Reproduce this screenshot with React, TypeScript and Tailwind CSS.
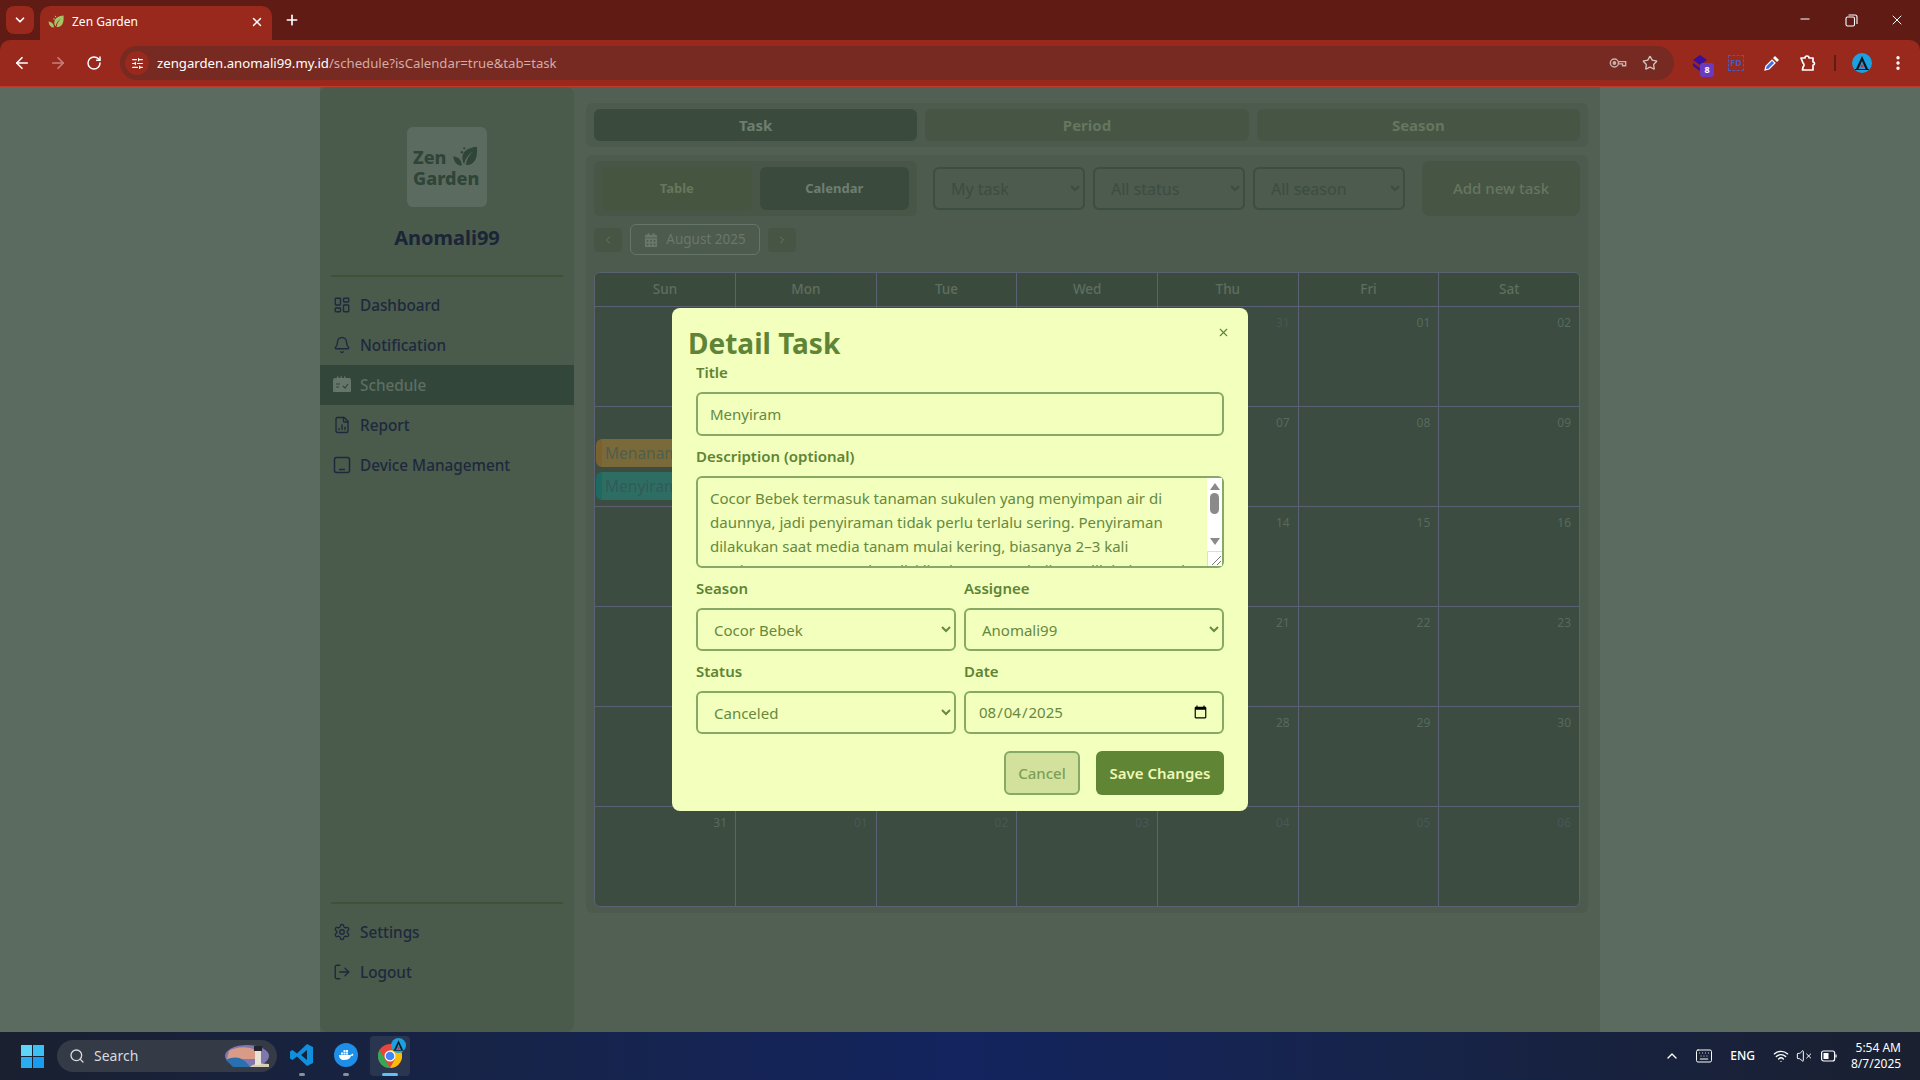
import {
  ArrowLeft,
  ArrowRight,
  Bell,
  ChevronDown,
  ChevronLeft,
  ChevronRight,
  ChevronUp,
  FileChartColumn,
  Keyboard,
  LayoutDashboard,
  LogOut,
  Minus,
  MoreVertical,
  Plus,
  RotateCw,
  Search,
  Settings,
  SlidersHorizontal,
  Star,
  VolumeX,
  Wifi,
  X,
} from 'lucide-react'
import { FaCalendarDays } from 'react-icons/fa6'

const days = ['Sun', 'Mon', 'Tue', 'Wed', 'Thu', 'Fri', 'Sat']

const dates = [
  ['27', '28', '29', '30', '31', '01', '02'],
  ['03', '04', '05', '06', '07', '08', '09'],
  ['10', '11', '12', '13', '14', '15', '16'],
  ['17', '18', '19', '20', '21', '22', '23'],
  ['24', '25', '26', '27', '28', '29', '30'],
  ['31', '01', '02', '03', '04', '05', '06'],
]

const description =
  'Cocor Bebek termasuk tanaman sukulen yang menyimpan air di daunnya, jadi penyiraman tidak perlu terlalu sering. Penyiraman dilakukan saat media tanam mulai kering, biasanya 2–3 kali seminggu tergantung kondisi lingkungan. Sebaiknya dilakukan pada pagi hari agar daun tidak membusuk.'

function LeafMark({ className }: { className?: string }) {
  return (
    <svg className={className} viewBox="0 0 32 28" fill="currentColor">
      <path d="M31 1c-9 1-16 4-18 11-1 4 0 8 2 11 1-6 5-12 11-16-5 5-8 10-9 17 8 1 13-5 14-13 .4-3 .4-7 0-10z" />
      <path d="M12 25C6 25 2 21 1 13c5 1 9 3 10 7 .5 2 .8 3 1 5z" />
      <circle cx="12" cy="8" r="1.6" />
      <circle cx="15" cy="3" r="1.3" />
    </svg>
  )
}

function ScheduleIcon() {
  return (
    <svg className="h-[18px] w-[18px]" viewBox="0 0 18 18" fill="#66756a">
      <path d="M0 4a2 2 0 012-2h2V.5h1.500V2h2V.5H9V2h2V.5h1.500V2H16a2 2 0 012 2v11a1 1 0 01-1 1H1a1 1 0 01-1-1z" />
      <path d="M3 8h4M3 11h3M10 10l2 2 3-4" stroke="#32473a" strokeWidth="1.200" fill="none" />
    </svg>
  )
}

function DeviceIcon() {
  return (
    <svg className="h-[18px] w-[18px]" viewBox="0 0 18 18" fill="none" stroke="currentColor" strokeWidth="1.500">
      <rect x="1.500" y="1.500" width="15" height="15" rx="2" />
      <path d="M6 13.500h6" />
    </svg>
  )
}

function KeyIcon() {
  return (
    <svg className="h-[18px] w-[18px]" viewBox="0 0 20 20" fill="none" stroke="#c9b0aa" strokeWidth="1.600">
      <circle cx="6" cy="10" r="4.500" />
      <circle cx="6" cy="10" r="1.300" fill="#c9b0aa" />
      <path d="M10.500 8.500H18.500V13H15V11H10.500" />
    </svg>
  )
}

function PuzzleIcon() {
  return (
    <svg className="h-[18px] w-[18px]" viewBox="0 0 18 18" fill="none" stroke="white" strokeWidth="1.700" strokeLinejoin="round">
      <path d="M2 4h4a2 2 0 014 0h4v4a1.500 1.500 0 010 3v5H3.500L4 13a2.500 2.500 0 000-4z" />
    </svg>
  )
}

function Avatar({ size }: { size: string }) {
  return (
    <svg className={size} viewBox="0 0 20 20">
      <circle cx="10" cy="10" r="10" fill="#1ba1df" />
      <path d="M4 16L10 3l6 13h-2.500L10 8l-3.500 8z" fill="#0d1620" />
      <circle cx="10" cy="13" r="1.500" fill="#e6252a" />
      <path d="M3 16.500h14" stroke="#0d1620" strokeWidth="1" />
    </svg>
  )
}

function ToolCell({ children }: { children: React.ReactNode }) {
  return <div className="flex h-9 w-9 items-center justify-center">{children}</div>
}

function BrowserBar() {
  return (
    <header className="shrink-0 bg-[#5f1b14] text-white">
      <div className="flex h-10 items-end">
        <div className="mb-[6px] ml-[6px] flex h-7 w-7 items-center justify-center rounded-lg bg-[#98291c]">
          <ChevronDown size={14} strokeWidth={3} />
        </div>
        <div className="ml-[6px] flex h-[34px] w-[232px] items-center rounded-t-[10px] bg-[#98291c] pb-[2px] pl-2 pr-2">
          <LeafMark className="h-4 w-4 text-[#a6c466]" />
          <span className="ml-2 flex-1 text-xs">Zen Garden</span>
          <X size={14} strokeWidth={2.500} />
        </div>
        <Plus className="mb-[12px] ml-[12px]" size={16} strokeWidth={2.500} />
        <div className="flex-1" />
        <div className="mb-[12px] flex">
          <div className="flex w-[46px] justify-center">
            <Minus size={14} />
          </div>
          <div className="flex w-[46px] items-center justify-center">
            <svg className="h-[13px] w-[13px]" viewBox="0 0 13 13" fill="none" stroke="white" strokeWidth="1.100">
              <rect x="1" y="3" width="8.500" height="9" rx="1.500" />
              <path d="M3.500 1h6.500a2 2 0 012 2v7" />
            </svg>
          </div>
          <div className="flex w-[46px] justify-center">
            <X size={16} strokeWidth={1.500} />
          </div>
        </div>
      </div>
      <div className="flex h-[46px] items-center rounded-t-[10px] bg-[#98291c] pl-1">
        <ToolCell>
          <ArrowLeft size={18} strokeWidth={2.200} />
        </ToolCell>
        <ToolCell>
          <ArrowRight className="text-[#c9807a]" size={18} strokeWidth={2.200} />
        </ToolCell>
        <ToolCell>
          <RotateCw size={16} strokeWidth={2.200} />
        </ToolCell>
        <div className="ml-2 flex h-[34px] w-[1554px] items-center rounded-full bg-[#762a22] pl-[5px] pr-4">
          <div className="flex h-6 w-6 items-center justify-center rounded-full bg-[#98291c]">
            <SlidersHorizontal size={13} strokeWidth={2.200} />
          </div>
          <span className="ml-2 flex-1 pt-px text-[13.200px]">
            zengarden.anomali99.my.id<span className="text-[#d3aca6]">/schedule?isCalendar=true&amp;tab=task</span>
          </span>
          <KeyIcon />
          <Star className="ml-[15px] text-[#d6c2bd]" size={16} strokeWidth={2} />
        </div>
        <div className="ml-2 flex">
          <ToolCell>
            <div className="relative h-[18px] w-[18px]">
              <svg className="h-[18px] w-[18px]" viewBox="0 0 18 18" fill="#3a0f9c">
                <path d="M9 1l7 5-7 5-7-5zM2 9l7 5 7-5v3l-7 5-7-5z" />
              </svg>
              <span className="absolute -bottom-[5px] -right-[5px] flex h-[14px] w-[14px] items-center justify-center rounded-[3px] bg-[#6a3bc0] text-[9px] font-bold">
                8
              </span>
            </div>
          </ToolCell>
          <ToolCell>
            <div className="flex h-4 w-4 items-center justify-center border border-dashed border-[#4f58b8] text-[9px] font-bold text-[#4f58b8]">
              FD
            </div>
          </ToolCell>
          <ToolCell>
            <svg className="h-4 w-4" viewBox="0 0 16 16">
              <path d="M1 15l1-4 6-6 3 3-6 6z" fill="#3f6fe0" stroke="white" strokeWidth="1.200" />
              <path d="M9 3l2-2 4 4-2 2z" fill="white" />
            </svg>
          </ToolCell>
          <ToolCell>
            <PuzzleIcon />
          </ToolCell>
        </div>
        <div className="ml-2 h-4 w-[2px] bg-[#5f1b14]" />
        <div className="ml-2 flex">
          <ToolCell>
            <Avatar size="h-5 w-5" />
          </ToolCell>
          <ToolCell>
            <MoreVertical size={18} strokeWidth={2.500} />
          </ToolCell>
        </div>
      </div>
      <div className="h-px bg-[#c0392b]" />
    </header>
  )
}

function NavItem({ icon, label, active }: { icon: React.ReactNode; label: string; active?: boolean }) {
  return (
    <div className={`flex h-10 items-center gap-[9px] pl-[13px] ${active ? 'bg-[#32473a] text-[#5e6e62]' : 'text-[#1d293d]'}`}>
      <span className="flex w-[18px] justify-center">{icon}</span>
      <span className="text-[15.300px] font-medium">{label}</span>
    </div>
  )
}

function Sidebar() {
  return (
    <aside className="flex w-[254px] shrink-0 flex-col rounded-lg bg-[#4a5a4b] pb-[40px]">
      <div className="mt-10 flex h-20 w-20 flex-col justify-center gap-[3px] self-center rounded-md bg-[#5c6b60] pl-[6px] text-[#2f4537]">
        <div className="flex h-[18px] items-center">
          <span className="text-[18px] font-extrabold leading-[18px]">Zen</span>
          <LeafMark className="ml-[3px] h-[22px] w-[32px]" />
        </div>
        <span className="text-[18px] font-extrabold leading-[18px]">Garden</span>
      </div>
      <h2 className="mt-[17px] text-center text-xl font-bold leading-7 text-[#1b2538]">Anomali99</h2>
      <div className="mx-[11px] mt-[23px] h-[2px] bg-[#3f5236]" />
      <nav className="mt-[8px]">
        <NavItem icon={<LayoutDashboard size={18} strokeWidth={1.800} />} label="Dashboard" />
        <NavItem icon={<Bell size={18} strokeWidth={1.800} />} label="Notification" />
        <NavItem icon={<ScheduleIcon />} label="Schedule" active />
        <NavItem icon={<FileChartColumn size={18} strokeWidth={1.800} />} label="Report" />
        <NavItem icon={<DeviceIcon />} label="Device Management" />
      </nav>
      <div className="mt-auto">
        <div className="mx-[11px] mb-[8px] h-[2px] bg-[#3f5236]" />
        <NavItem icon={<Settings size={18} strokeWidth={1.800} />} label="Settings" />
        <NavItem icon={<LogOut size={18} strokeWidth={1.800} />} label="Logout" />
      </div>
    </aside>
  )
}

function TabButton({ label, active }: { label: string; active?: boolean }) {
  return (
    <button className={`flex-1 rounded-md text-[15px] font-bold ${active ? 'bg-[#3a4b3e] text-[#6e7e70]' : 'bg-[#475544] text-[#66765f]'}`}>
      {label}
    </button>
  )
}

function FilterSelect({ label }: { label: string }) {
  return (
    <select
      defaultValue={label}
      className="h-[43px] w-[152px] rounded-md border-2 border-[#3b4e41] bg-transparent px-3 text-base text-[#3b4d41]"
    >
      <option>{label}</option>
    </select>
  )
}

function Toolbar() {
  return (
    <div className="flex items-start">
      <div className="flex h-[55px] w-[323px] gap-2 rounded-md bg-[#485647] p-[6px] px-2">
        <button className="flex-1 rounded-md bg-[#465540] text-[13px] font-bold text-[#66775d]">Table</button>
        <button className="flex-1 rounded-md bg-[#3a4b3e] text-[13px] font-bold text-[#6e7e70]">Calendar</button>
      </div>
      <div className="ml-4 mt-[6px] flex gap-2">
        <FilterSelect label="My task" />
        <FilterSelect label="All status" />
        <FilterSelect label="All season" />
      </div>
      <button className="ml-auto h-[55px] w-[158px] rounded-lg bg-[#475545] text-[15px] font-medium text-[#66765f]">Add new task</button>
    </div>
  )
}

function DateNav() {
  return (
    <div className="mt-2 flex items-center gap-2">
      <button className="flex h-6 w-7 items-center justify-center rounded bg-[#475544] text-[#66765f]">
        <ChevronLeft size={12} />
      </button>
      <div className="flex h-[31px] w-[130px] items-center justify-center gap-2 rounded-md border border-[#66756a] text-[13.500px] text-[#68786b]">
        <FaCalendarDays size={14} />
        August 2025
      </div>
      <button className="flex h-6 w-7 items-center justify-center rounded bg-[#475544] text-[#66765f]">
        <ChevronRight size={12} />
      </button>
    </div>
  )
}

function Calendar() {
  return (
    <div className="mt-[17px] h-[635px] overflow-hidden rounded-md border border-[#596172] bg-[#3c4c40]">
      <div className="grid h-[33px] grid-cols-[140px_repeat(6,1fr)] bg-[#3a4b3e]">
        {days.map((day) => (
          <div key={day} className="flex items-center justify-center border-l border-[#596172] text-[13.500px] font-medium text-[#5f6e5f] first:border-l-0">
            {day}
          </div>
        ))}
      </div>
      <div className="grid h-[600px] grid-cols-[140px_repeat(6,1fr)] grid-rows-6">
        {dates.flat().map((date, i) => (
          <div key={i} className="relative border-l border-t border-[#596172] p-2 text-right text-xs text-[#586a5d] [&:nth-child(7n+1)]:border-l-0">
            <span className={i < 5 || i > 35 ? 'text-[#475857]' : ''}>{date}</span>
            {i === 7 && (
              <div className="absolute left-[1px] top-[32px] flex w-[200px] flex-col gap-[5px] text-left text-[15.500px]">
                <div className="h-[28px] rounded-md border-l-[6px] border-[#7a6230] bg-[#7a6a3a] pl-[3px] leading-[28px] text-[#505e4a]">Menanam</div>
                <div className="h-[28px] rounded-md border-l-[6px] border-[#1f6a60] bg-[#2e6e62] pl-[3px] leading-[28px] text-[#33595a]">Menyiram</div>
              </div>
            )}
          </div>
        ))}
      </div>
    </div>
  )
}

function MainContent() {
  return (
    <main className="flex-1 px-3 pt-4">
      <div className="flex h-11 gap-2 rounded-md bg-[#4d5a4e] px-2 py-[6px]">
        <TabButton label="Task" active />
        <TabButton label="Period" />
        <TabButton label="Season" />
      </div>
      <section className="mt-2 rounded-md bg-[#4d5a4e] px-2 pb-[6px] pt-[6px]">
        <Toolbar />
        <DateNav />
        <Calendar />
      </section>
    </main>
  )
}

function Label({ text }: { text: string }) {
  return <label className="mb-2 block text-[15px] font-semibold leading-6 text-[#5f8435]">{text}</label>
}

function TextareaScrollbar() {
  return (
    <div className="pointer-events-none absolute bottom-[2px] right-[2px] top-[2px] flex w-[15px] flex-col items-center bg-white">
      <div className="mt-[5px] h-0 w-0 border-x-[5px] border-b-[7px] border-x-transparent border-b-[#8a8a8a]" />
      <div className="mt-[3px] h-[21px] w-[9px] rounded-full bg-[#8a8a8a]" />
      <div className="mt-[24px] h-0 w-0 border-x-[5px] border-t-[7px] border-x-transparent border-t-[#8a8a8a]" />
      <svg className="mt-auto h-[15px] w-[15px]" viewBox="0 0 15 15" fill="none" stroke="#777">
        <path d="M.5 15V.5H15" stroke="#ddd" />
        <path d="M5 14L14 5M10 14l4-4" />
      </svg>
    </div>
  )
}

function TaskModal() {
  const fieldClass = 'rounded-md border-2 border-[#88a866] bg-transparent px-3 text-[15px] text-[#67893f] outline-none'

  return (
    <div className="absolute inset-0 flex items-center justify-center">
      <div className="relative h-[503px] w-[576px] rounded-lg bg-[#f2ffbd] pt-4">
        <X className="absolute right-[18px] top-[18px] text-[#5f8435]" size={13} strokeWidth={2} />
        <h1 className="h-9 pl-4 text-[28px] font-bold leading-[38px] text-[#5f8435]">Detail Task</h1>
        <form className="px-6">
          <Label text="Title" />
          <input readOnly value="Menyiram" className={`h-11 w-full ${fieldClass}`} />
          <div className="mt-2">
            <Label text="Description (optional)" />
            <div className="relative">
              <textarea
                readOnly
                value={description}
                className={`block h-[92px] w-full resize-none overflow-hidden py-2 pr-[27px] leading-6 ${fieldClass}`}
              />
              <TextareaScrollbar />
            </div>
          </div>
          <div className="mt-2 grid grid-cols-2 gap-x-2">
            <div>
              <Label text="Season" />
              <select defaultValue="Cocor Bebek" className={`h-[43px] w-full ${fieldClass}`}>
                <option>Cocor Bebek</option>
              </select>
            </div>
            <div>
              <Label text="Assignee" />
              <select defaultValue="Anomali99" className={`h-[43px] w-full ${fieldClass}`}>
                <option>Anomali99</option>
              </select>
            </div>
            <div className="mt-2">
              <Label text="Status" />
              <select defaultValue="Canceled" className={`h-[43px] w-full ${fieldClass}`}>
                <option>Canceled</option>
              </select>
            </div>
            <div className="mt-2">
              <Label text="Date" />
              <input type="date" defaultValue="2025-08-04" className={`h-[43px] w-full ${fieldClass}`} />
            </div>
          </div>
          <div className="mt-[17px] flex justify-end gap-4">
            <button type="button" className="h-11 w-[76px] rounded-md border-2 border-[#88a866] bg-[#d2e19b] text-[15px] font-medium text-[#7f9e58]">
              Cancel
            </button>
            <button type="button" className="h-11 w-[128px] rounded-md bg-[#5f8535] text-[15px] font-semibold text-[#eef8b4]">
              Save Changes
            </button>
          </div>
        </form>
      </div>
    </div>
  )
}

function ChromeLogo() {
  return (
    <svg className="h-6 w-6" viewBox="0 0 24 24">
      <circle cx="12" cy="12" r="12" fill="#e8453c" />
      <path d="M12 24A12 12 0 0 1 1.600 6L7 15.500 12 24z" fill="#34a853" />
      <path d="M12 24a12 12 0 0 0 10.400-18H12l5 9z" fill="#fbbc05" />
      <circle cx="12" cy="12" r="5.500" fill="white" />
      <circle cx="12" cy="12" r="4.300" fill="#4285f4" />
    </svg>
  )
}

function TaskBar() {
  return (
    <footer className="flex h-12 shrink-0 items-center bg-gradient-to-r from-[#1a2030] via-[#13245f] to-[#1a2030] text-white">
      <div className="ml-[21px] grid h-[23px] w-[23px] grid-cols-2 gap-[1px]">
        <div className="bg-[#5fd6f7]" />
        <div className="bg-[#3bc0f3]" />
        <div className="bg-[#28aef0]" />
        <div className="bg-[#1a9cec]" />
      </div>
      <div className="ml-[13px] flex h-8 w-[220px] items-center rounded-full bg-[#343a46] pl-3 pr-[6px] text-sm text-[#d8dade]">
        <Search size={16} strokeWidth={2} />
        <span className="ml-[9px] flex-1">Search</span>
        <svg className="h-[26px] w-[46px]" viewBox="0 0 46 26">
          <ellipse cx="22" cy="13" rx="22" ry="11" fill="#7f78b0" />
          <path d="M4 8c8-5 20-5 28 0v8H2z" fill="#d99a86" />
          <path d="M1 17c10-5 18-2 24 7H8z" fill="#2a6fb0" />
          <path d="M25 24c4-4 12-4 19-3v3z" fill="#d9cdb4" />
          <rect x="30" y="8" width="6" height="14" fill="#e8e2d4" />
          <rect x="29" y="3" width="8" height="5" fill="#22242b" />
        </svg>
      </div>
      <div className="ml-[13px] flex flex-col items-center">
        <svg className="mt-[6px] h-6 w-6" viewBox="0 0 24 24">
          <path d="M17 1l6 3v16l-6 3-10-9.500L2.500 17 0 15.500v-7L2.500 7 7 10.500zM17 7l-6 5 6 5z" fill="#0f8fdc" />
        </svg>
        <div className="mt-[6px] h-[3px] w-[6px] rounded-full bg-[#8a8f99]" />
      </div>
      <div className="ml-5 flex flex-col items-center">
        <div className="mt-[6px] flex h-6 w-6 items-center justify-center rounded-full bg-[#1d8fe8]">
          <svg className="h-4 w-4" viewBox="0 0 16 16" fill="white">
            <path d="M1 8h11c1 0 2-1 2.500-1.500.5.500 1 1 1 1.500-1 1-2 1-2.500 1-1 3-4 4-7 4C3 13 1 11 1 8z" />
            <rect x="3" y="5.500" width="2" height="2" />
            <rect x="5.500" y="5.500" width="2" height="2" />
            <rect x="8" y="5.500" width="2" height="2" />
            <rect x="5.500" y="3" width="2" height="2" />
            <rect x="8" y="3" width="2" height="2" />
          </svg>
        </div>
        <div className="mt-[6px] h-[3px] w-[6px] rounded-full bg-[#8a8f99]" />
      </div>
      <div className="relative ml-3 flex h-10 w-10 flex-col items-center rounded bg-[#2a3550]">
        <div className="mt-2">
          <ChromeLogo />
        </div>
        <Avatar size="absolute right-[4px] top-[2px] h-[15px] w-[15px]" />
        <div className="absolute bottom-0 h-[3px] w-4 rounded-full bg-[#5cc4f5]" />
      </div>
      <div className="flex-1" />
      <ChevronUp size={16} strokeWidth={2} />
      <Keyboard className="ml-[15px]" size={18} strokeWidth={1.300} />
      <span className="ml-[17px] text-xs font-medium">ENG</span>
      <Wifi className="ml-[18px]" size={16} strokeWidth={2} />
      <VolumeX className="ml-[7px]" size={16} strokeWidth={1.500} />
      <svg className="ml-[9px] h-3 w-4" viewBox="0 0 16 12" fill="none" stroke="white" strokeWidth="1.200">
        <rect x="0.600" y="1" width="13" height="10" rx="2" />
        <rect x="2.500" y="3" width="5" height="6" fill="white" stroke="none" />
        <path d="M15 4.500v3" />
      </svg>
      <div className="ml-[14px] mr-[19px] w-[50px] text-right text-xs leading-4">
        <div>5:54 AM</div>
        <div>8/7/2025</div>
      </div>
    </footer>
  )
}

export default function App() {
  return (
    <div className="flex h-screen w-screen flex-col overflow-hidden font-['Noto_Sans',sans-serif]">
      <BrowserBar />
      <div className="relative flex flex-1 justify-center overflow-hidden bg-[#5b6b5f]">
        <div className="flex w-[1280px] bg-[#525f53]">
          <Sidebar />
          <MainContent />
        </div>
        <TaskModal />
      </div>
      <TaskBar />
    </div>
  )
}
